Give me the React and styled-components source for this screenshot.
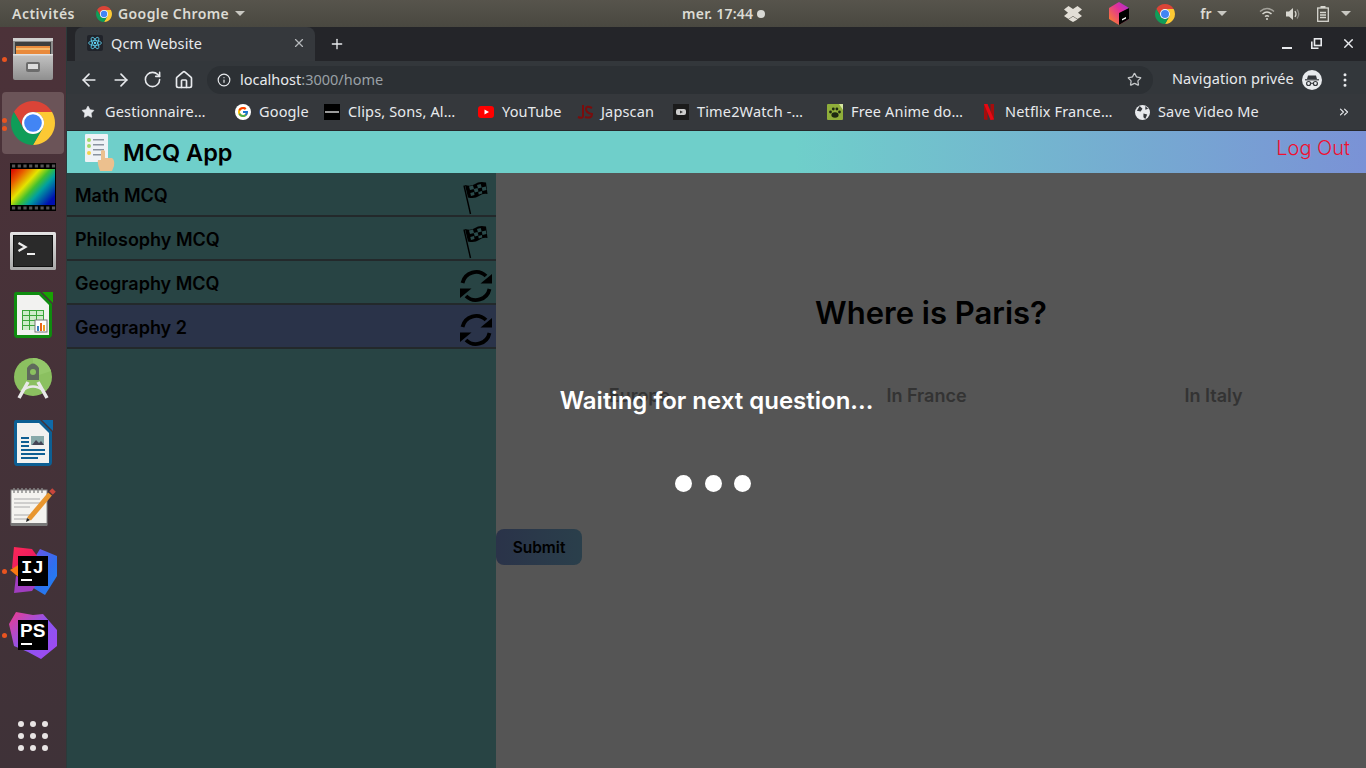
import React from 'react';
import styled, { createGlobalStyle } from 'styled-components';
import { ArrowLeft, ArrowRight, RotateCw, Home, Star, Info, X, Plus, MoreVertical, ChevronsRight } from 'lucide-react';
import { FcGoogle } from 'react-icons/fc';

const Global = createGlobalStyle`
  html, body { margin: 0; padding: 0; width: 1366px; height: 768px; overflow: hidden; background: #555; }
  * { box-sizing: border-box; }
`;
const UI = `"Noto Sans", "Open Sans", sans-serif`;
const APP = `"Inter", "Lato", sans-serif`;

const Screen = styled.div`display:flex;flex-direction:column;width:1366px;height:768px;`;
const TopBar = styled.header`
  height:27px;flex:none;display:flex;align-items:center;position:relative;
  background:linear-gradient(#57544c,#494840);color:#dcdbd4;
  font:600 14px ${UI};
`;
const Activities = styled.span`margin-left:12px;width:84px;flex:none;letter-spacing:.5px;`;
const AppMenu = styled.div`display:flex;align-items:center;gap:6px;flex:none;width:150px;letter-spacing:.4px;`;
const Caret = styled.i`width:0;height:0;border-left:5px solid transparent;border-right:5px solid transparent;border-top:5px solid #c9c8c2;display:inline-block;`;
const Clock = styled.div`position:absolute;left:682px;top:0;height:27px;display:flex;align-items:center;gap:4px;letter-spacing:.25px;`;
const ClockDot = styled.i`width:8px;height:8px;border-radius:50%;background:#d8d8d4;`;
const Tray = styled.div`margin-left:auto;display:flex;align-items:center;height:27px;padding-right:12px;`;
const TraySlot = styled.div`display:flex;align-items:center;justify-content:center;width:${p=>p.$w}px;margin-left:${p=>p.$ml||0}px;`;

const Body = styled.div`flex:1;display:flex;min-height:0;`;
const Dock = styled.nav`width:67px;flex:none;display:flex;flex-direction:column;background:linear-gradient(#4c3239,#3f3238);border-right:1px solid #2c3a3a;position:relative;`;
const DockItem = styled.div`
  height:64px;flex:none;display:flex;align-items:center;justify-content:center;position:relative;
  &::before{content:"";position:absolute;inset:1px 2px 1px 2px;border-radius:4px;background:${p=>p.$active?'#6b5458':'transparent'};}
  & > svg{position:relative;}
`;
const Pip = styled.i`position:absolute;left:2px;top:${p=>p.$top}px;width:5px;height:5px;border-radius:50%;background:#e95420;`;
const AppGrid = styled.div`margin-top:auto;margin-bottom:17px;align-self:center;display:grid;grid-template-columns:repeat(3,6px);gap:6px;`;
const GridDot = styled.i`width:6px;height:6px;border-radius:50%;background:#e8e4e4;`;

const Browser = styled.div`flex:1;min-width:0;display:flex;flex-direction:column;`;
const TabStrip = styled.div`height:34px;flex:none;background:#242529;display:flex;align-items:stretch;padding-left:8px;color:#e8eaed;`;
const Tab = styled.div`width:240px;height:34px;background:#35383c;border-radius:8px 8px 0 0;display:flex;align-items:center;padding:0 9px 3px 12px;gap:8px;font:14.5px ${UI};`;
const TabTitle = styled.span`flex:1;letter-spacing:.1px;`;
const Favicon = styled.span`width:16px;height:16px;background:#20232a;border-radius:2px;display:flex;align-items:center;justify-content:center;`;
const NewTab = styled.div`width:44px;display:flex;align-items:center;justify-content:center;padding-bottom:1px;`;
const WinControls = styled.div`margin-left:auto;display:flex;align-items:center;gap:19px;padding-right:10px;padding-bottom:1px;`;
const Toolbar = styled.div`height:33px;flex:none;background:#33373b;display:flex;align-items:center;padding:4px 0 0 12px;color:#e8eaed;`;
const NavBtns = styled.div`display:flex;align-items:center;gap:12px;width:128px;flex:none;`;
const Omni = styled.div`width:946px;height:28px;flex:none;border-radius:14px;background:#2c3034;display:flex;align-items:center;padding:0 11px 0 10px;gap:9px;font:14.5px ${UI};`;
const Host = styled.span`color:#e8eaed;`;
const Path = styled.span`color:#9aa0a6;`;
const OmniText = styled.span`flex:1;margin-top:-2px;`;
const Incog = styled.div`display:flex;align-items:center;font:14.5px ${UI};margin-left:19px;gap:8px;letter-spacing:.1px;white-space:nowrap;`;
const IncogLabel = styled.span`margin-top:-3px;`;
const Bookmarks = styled.div`height:37px;flex:none;background:#35383c;border-bottom:1px solid #26282b;display:flex;align-items:center;padding:0 0 0 13px;color:#e8eaed;font:14.5px ${UI};letter-spacing:.15px;position:relative;`;
const Bm = styled.div`width:${p=>p.$w}px;flex:none;display:flex;align-items:center;gap:8px;white-space:nowrap;`;
const BmLabel = styled.span`margin-top:-2px;`;
const Overflow = styled.div`margin-left:auto;padding-right:15px;display:flex;`;

const AppWrap = styled.div`flex:1;min-height:0;display:flex;flex-direction:column;font-family:${APP};`;
const AppHeader = styled.div`height:42px;flex:none;background:linear-gradient(90deg,#6fcfca 0%,#6fcfca 56%,#7a92d6 100%);display:flex;align-items:center;padding:0 16px 0 17px;`;
const Brand = styled.div`display:flex;align-items:center;gap:7px;font:600 23.5px ${APP};color:#000;`;
const LogOut = styled.a`margin-left:auto;margin-bottom:8px;font:300 20px ${APP};color:#f01030;`;
const Split = styled.div`flex:1;min-height:0;display:flex;`;
const Sidebar = styled.aside`width:429px;flex:none;background:#284444;`;
const Row = styled.div`height:44px;display:flex;align-items:center;justify-content:space-between;padding:2px 3px 0 8px;border-bottom:2px solid #23292b;background:${p=>p.$active?'#2a3349':'transparent'};font:600 18px ${APP};color:#000;overflow:hidden;`;
const FlagWrap = styled.span`display:flex;margin:6px 5px 0 0;`;
const SyncWrap = styled.span`display:flex;margin:6px 0 0 0;`;
const Main = styled.main`flex:1;position:relative;background:#555;display:flex;flex-direction:column;`;
const Question = styled.h1`margin:118px 0 0;text-align:center;font:600 31px/44px ${APP};color:#000;`;
const Answers = styled.div`display:grid;grid-template-columns:repeat(3,287px);margin-top:49px;`;
const Answer = styled.div`text-align:center;font:600 18px/24px ${APP};color:#333;`;
const Submit = styled.button`width:86px;height:36px;margin-top:121px;border:0;border-radius:8px;background:linear-gradient(90deg,#2a3349,#2a3f4b);font:600 15.5px ${APP};color:#000;padding:0;`;
const Overlay = styled.div`position:absolute;left:0;top:212px;width:441px;display:flex;flex-direction:column;align-items:center;`;
const Waiting = styled.div`font:600 24px/32px ${APP};color:#fff;white-space:nowrap;`;
const Dots = styled.div`display:flex;gap:12.5px;margin-top:58px;margin-left:-7px;`;
const Dot = styled.i`width:17px;height:17px;border-radius:50%;background:#fff;`;

const Chrome = ({s=24}) => (
  <svg width={s} height={s} viewBox="4 4 40 40">
    <path fill="#db4437" d="M41.32 14H24A10 10 0 0 0 15.34 29L6.68 14A20 20 0 0 1 41.32 14Z"/>
    <path fill="#fcc934" d="M24 44L32.66 29A10 10 0 0 0 24 14H41.32A20 20 0 0 1 24 44Z"/>
    <path fill="#0f9d58" d="M6.68 14L15.34 29A10 10 0 0 0 32.66 29L24 44A20 20 0 0 1 6.68 14Z"/>
    <circle cx="24" cy="24" r="10" fill="#fff"/><circle cx="24" cy="24" r="8" fill="#4285f4"/>
  </svg>
);
const Files = () => (
  <svg width="42" height="44" viewBox="0 0 42 44">
    <rect x="1" y="1" width="40" height="20" rx="2" fill="#8d8d8d"/>
    <rect x="1" y="1" width="40" height="3" fill="#cfcfcf"/>
    <rect x="3" y="5" width="36" height="12" fill="#3e3e3e"/>
    <rect x="4" y="9" width="34" height="8" fill="#e98a3c"/><rect x="4" y="11" width="34" height="2" fill="#f7bb6c"/>
    <defs><linearGradient id="fl" x1="0" y1="0" x2="0" y2="1"><stop offset="0" stopColor="#c4c4c4"/><stop offset="1" stopColor="#8f8f8f"/></linearGradient></defs>
    <rect x="1" y="17" width="40" height="26" rx="2" fill="url(#fl)"/>
    <rect x="1" y="17" width="40" height="1.5" fill="#e2e2e2"/>
    <rect x="14" y="25" width="14" height="10" rx="2" fill="#6c6c6c"/><rect x="16" y="27" width="10" height="5" fill="#ddd"/>
  </svg>
);
const Film = () => (
  <svg width="46" height="48" viewBox="0 0 46 48">
    <defs><linearGradient id="rb" x1="0" y1="0" x2="1" y2=".75">
      <stop offset="0" stopColor="#d80000"/><stop offset=".2" stopColor="#e85a00"/><stop offset=".42" stopColor="#e4e400"/><stop offset=".58" stopColor="#40c030"/><stop offset=".72" stopColor="#00a0a0"/><stop offset="1" stopColor="#0010b0"/>
    </linearGradient></defs>
    <rect width="46" height="48" fill="#000"/>
    <rect x="1" y="6" width="44" height="36" fill="url(#rb)"/>
    {[0,1,2,3,4,5,6,7].map(i=><g key={i} fill="#555"><rect x={2+i*5.7} y="1.5" width="3.2" height="3"/><rect x={2+i*5.7} y="43.5" width="3.2" height="3"/></g>)}
  </svg>
);
const Term = () => (
  <svg width="46" height="38" viewBox="0 0 46 38">
    <defs><linearGradient id="tm" x1="0" y1="0" x2="0" y2="1"><stop offset="0" stopColor="#e4e4e4"/><stop offset="1" stopColor="#a8a8a8"/></linearGradient></defs>
    <rect width="46" height="38" rx="1.5" fill="url(#tm)"/>
    <rect x="3.5" y="3.5" width="39" height="31" fill="#2a2a2a" stroke="#111"/>
    <path d="M8.5 11l7 4-7 4" stroke="#eee" strokeWidth="2.2" fill="none"/>
    <rect x="17" y="21" width="8" height="2" fill="#eee"/>
  </svg>
);
const Calc = () => (
  <svg width="40" height="48" viewBox="0 0 40 48">
    <path d="M3 1H27L39 13V43Q39 47 35 47H4Q1 47 1 43V4Q1 1 3 1Z" fill="#0f8c0f"/>
    <path d="M4 4H26L36 14V44H4Z" fill="#f2f2f0"/>
    <path d="M29 1H40V12Z" fill="#18a303"/>
    <path d="M9 19H31V39H9Z" fill="#3aa53a"/>
    <g fill="#cfeccb">{[0,1,2].map(c=>[0,1,2,3].map(r=><rect key={c+'-'+r} x={10+c*7} y={20+r*5} width="6" height="4"/>))}</g>
    <rect x="22" y="29" width="12" height="12" fill="#fff" stroke="#777"/>
    <rect x="24" y="35" width="2" height="5" fill="#3a7fc0"/><rect x="27" y="32" width="2" height="8" fill="#e8641b"/><rect x="30" y="34" width="2" height="6" fill="#f0a020"/>
  </svg>
);
const Android = () => (
  <svg width="40" height="42" viewBox="0 0 40 42">
    <circle cx="20" cy="19" r="19" fill="#8bc060"/>
    <path d="M20 0A19 19 0 0 1 38 13L20 19Z" fill="#94c86a"/>
    <path d="M14 10Q20 1 26 10V22H14Z" fill="#5f6a5c"/>
    <circle cx="20" cy="14" r="3" fill="#8bc060"/>
    <path d="M15 24L6 40M25 24L34 40" stroke="#e8e8e8" strokeWidth="3.5"/>
    <path d="M9 33Q20 24 31 33" stroke="#e8e8e8" strokeWidth="2.5" fill="none"/>
  </svg>
);
const Writer = () => (
  <svg width="40" height="48" viewBox="0 0 40 48">
    <path d="M3 1H27L39 13V43Q39 47 35 47H4Q1 47 1 43V4Q1 1 3 1Z" fill="#0d5f93"/>
    <path d="M4 4H26L36 14V44H4Z" fill="#f2f2f0"/>
    <path d="M29 1H40V12Z" fill="#0f6aa8"/>
    <rect x="18" y="17" width="13" height="9" fill="#8aa"/><path d="M19 26l4-5 3 3 2-2 3 4Z" fill="#445"/>
    <g fill="#0f5f93"><rect x="8" y="18" width="8" height="2"/><rect x="8" y="22" width="8" height="2"/><rect x="8" y="26" width="8" height="2"/><rect x="8" y="30" width="24" height="2"/><rect x="8" y="34" width="24" height="2"/><rect x="8" y="38" width="17" height="2"/></g>
  </svg>
);
const Notes = () => (
  <svg width="46" height="40" viewBox="0 0 46 40">
    <rect x="1" y="3" width="36" height="35" fill="#f4f3ef" stroke="#888"/>
    <rect x="1" y="36" width="36" height="3" fill="#777"/>
    <g stroke="#888" strokeWidth="1.4">{[4,8,12,16,20,24,28,32].map(x=><path key={x} d={`M${x} 1v5`}/>)}</g>
    <g stroke="#aaa" strokeWidth="1">{[12,16,20,28,32].map(y=><path key={y} d={`M4 ${y}H${y<20?30:20}`}/>)}</g>
    <path d="M19 32L40 7" stroke="#e8962e" strokeWidth="5"/><path d="M41 6l3-3" stroke="#c8463c" strokeWidth="5"/>
    <path d="M16 35l1-4 3 2Z" fill="#222"/>
  </svg>
);
const IJ = () => (
  <svg width="50" height="50" viewBox="0 0 50 50">
    <defs>
      <linearGradient id="ijb" x1="0" y1="0" x2="1" y2="1"><stop offset="0" stopColor="#7a4ee8"/><stop offset=".6" stopColor="#2f6fee"/><stop offset="1" stopColor="#1a86f2"/></linearGradient>
      <linearGradient id="ijp" x1="0" y1="0" x2="1" y2="1"><stop offset="0" stopColor="#fe2857"/><stop offset="1" stopColor="#dd1265"/></linearGradient>
    </defs>
    <path d="M32 3L49 10L49 30L37 49L22 40L20 22Z" fill="url(#ijb)"/>
    <path d="M6 1L24 3L32 14L22 30L4 22Z" fill="url(#ijp)"/>
    <path d="M2 24L12 18L14 34Z" fill="#f97a12"/>
    <path d="M8 30L30 36L24 45L6 47Z" fill="#a03dc0"/>
    <rect x="10" y="10" width="30" height="30" fill="#000"/>
    <text x="13" y="27" fill="#fff" fontFamily="Liberation Mono, monospace" fontWeight="700" fontSize="19">IJ</text>
    <rect x="13" y="33" width="11" height="2" fill="#fff"/>
  </svg>
);
const PS = () => (
  <svg width="50" height="50" viewBox="0 0 50 50">
    <defs><linearGradient id="psg" x1="0" y1="0" x2="1" y2="1"><stop offset="0" stopColor="#ee3a8c"/><stop offset=".5" stopColor="#8a56f2"/><stop offset="1" stopColor="#a347f0"/></linearGradient></defs>
    <path d="M8 2L25 5L35 4L49 20L49 36L33 49L20 42L6 36L1 14Z" fill="url(#psg)"/>
    <rect x="10" y="10" width="30" height="30" fill="#000"/>
    <text x="12" y="27" fill="#fff" fontFamily="Liberation Sans, sans-serif" fontWeight="700" fontSize="19">PS</text>
    <rect x="13" y="33" width="11" height="2" fill="#fff"/>
  </svg>
);
const Flag = () => (
  <svg width="25" height="33" viewBox="0 0 25 33">
    <path d="M1 3.5L7.5 32" stroke="#000" strokeWidth="1.4"/>
    <path d="M2 3Q8 5 12 2T23 .5L24.5 12Q20 11 16 14T5 15.5Z" fill="#000"/>
    <g fill="#2a4b4b">
      <path d="M6 4.5l4-1 1 3.5-4 1ZM14 3l3.7-1 1 3.5-3.7 1ZM10.8 7l3.7-1 1 3.5-3.7 1ZM18.8 5.5l4-1 .7 3.6-4 1ZM7.3 11l3.7-1 .5 3-3.5.9ZM15.3 10l3.7-1 .2 2.6-3.5 1Z"/>
    </g>
  </svg>
);
const Sync = () => (
  <svg width="34" height="34" viewBox="0 0 34 34" fill="none">
    <path d="M3.5 14A14 14 0 0 1 27 7" stroke="#000" strokeWidth="3.8"/>
    <path d="M30.5 20A14 14 0 0 1 7 27" stroke="#000" strokeWidth="3.8"/>
    <path d="M33 14.5H21.5L33 5Z" fill="#000"/><path d="M1 19.5H12.5L1 29Z" fill="#000"/>
  </svg>
);
const ReactMark = () => (
  <svg width="14" height="14" viewBox="-12 -12 24 24" fill="none" stroke="#61dafb" strokeWidth="1.3">
    <circle r="2" fill="#61dafb" stroke="none"/><ellipse rx="11" ry="4.2"/><ellipse rx="11" ry="4.2" transform="rotate(60)"/><ellipse rx="11" ry="4.2" transform="rotate(120)"/>
  </svg>
);
const Logo = () => (
  <svg width="32" height="38" viewBox="0 0 32 38">
    <rect x="1" y="1" width="23" height="28" rx="1" fill="#eef2f6"/>
    <g fill="#8a93a0"><rect x="9" y="6" width="11" height="1.5"/><rect x="9" y="11" width="11" height="1.5"/><rect x="9" y="16" width="11" height="1.5"/><rect x="9" y="21" width="11" height="1.5"/></g>
    <circle cx="5" cy="7" r="2" fill="#a3d86a"/><circle cx="5" cy="13" r="2" fill="#a3d86a"/><circle cx="5" cy="20" r="2" fill="#f3d34a"/>
    <path d="M16 38Q13 30 14 27L17 27V18Q19 16 21 18V25H28Q31 27 30 33L28 38Z" fill="#ecc08e"/>
  </svg>
);
const Incognito = () => (
  <svg width="20" height="20" viewBox="0 0 20 20">
    <circle cx="10" cy="10" r="10" fill="#e8eaed"/>
    <path d="M6 5.5H14L15 9H5Z" fill="#35383c"/><rect x="3" y="9.2" width="14" height="1.2" fill="#35383c"/>
    <circle cx="6.6" cy="13.5" r="2" fill="none" stroke="#35383c" strokeWidth="1.2"/><circle cx="13.4" cy="13.5" r="2" fill="none" stroke="#35383c" strokeWidth="1.2"/><path d="M8.6 13.3h2.8" stroke="#35383c"/>
  </svg>
);
const Globe = () => (
  <svg width="15" height="15" viewBox="0 0 16 16">
    <circle cx="8" cy="8" r="8" fill="#e8eaed"/>
    <path d="M5 1L8 4 6 7 2 6ZM9 9l4 1-2 5-2-2ZM11 1l3 3-3 1Z" fill="#35383c"/>
  </svg>
);
const GoogleIcon = () => <svg width="16" height="16" viewBox="0 0 16 16"><circle cx="8" cy="8" r="8" fill="#fff"/><g transform="translate(2 2)"><FcGoogle size={12}/></g></svg>;
const Clips = () => <svg width="16" height="16" viewBox="0 0 16 16"><rect width="16" height="16" fill="#000"/><rect x="1" y="7" width="14" height="2" fill="#999"/></svg>;
const YT = () => <svg width="16" height="16" viewBox="0 0 16 16"><rect y="2" width="16" height="12" rx="3" fill="#f00"/><path d="M6.5 5.5L11 8l-4.5 2.5Z" fill="#fff"/></svg>;
const JS = () => <svg width="16" height="16" viewBox="0 0 16 16" fill="none" stroke="#7a0c0c" strokeWidth="2"><path d="M6 1V12Q6 15 1 13"/><path d="M15 4Q9 1 9 5T15 10Q15 15 8 13"/></svg>;
const T2W = () => <svg width="16" height="16" viewBox="0 0 16 16"><rect width="16" height="16" fill="#1b1b1b"/><rect x="3" y="5" width="10" height="6" rx="2" fill="#ccc"/><path d="M7 6.5L10 8l-3 1.5Z" fill="#333"/></svg>;
const Paw = () => <svg width="16" height="16" viewBox="0 0 16 16"><rect width="16" height="16" rx="1" fill="#8fae3a"/><path d="M12 0H16V6Z" fill="#d5e6a0"/><g fill="#1e2a12"><ellipse cx="8" cy="11" rx="3.6" ry="2.8"/><circle cx="3.5" cy="8" r="1.4"/><circle cx="6.3" cy="5" r="1.4"/><circle cx="9.9" cy="5" r="1.4"/><circle cx="12.5" cy="8" r="1.4"/></g></svg>;
const Netflix = () => <svg width="16" height="16" viewBox="0 0 16 16"><path d="M3 0H6.5V16L3 15.5Z" fill="#a50d0d"/><path d="M9.5 0H13V15.5L9.5 16Z" fill="#a50d0d"/><path d="M3 0H6.5L13 15.5 9.5 16Z" fill="#e50914"/></svg>;
const Dropbox = () => <svg width="18" height="16" viewBox="0 0 18 16" fill="#e2ded6"><path d="M4.5 0L9 3 13.5 0 18 3.4 14 6.8 18 10 13.5 13 9 10 4.5 13 0 10 4 6.8 0 3.4Z"/><path d="M4.5 13.5L9 10.5l4.5 3L9 16Z"/></svg>;
const Toolbox = () => <svg width="20" height="23" viewBox="0 0 20 23"><defs><linearGradient id="tb" x1="0" y1="1" x2="1" y2="0"><stop offset="0" stopColor="#ff8a1e"/><stop offset=".6" stopColor="#e0309a"/><stop offset="1" stopColor="#a030e0"/></linearGradient></defs><path d="M10 0L20 6V17L10 23 0 17V6Z" fill="url(#tb)"/><path d="M10 11L20 6V17L10 23Z" fill="#000"/><path d="M13 17l4-2v1.5l-4 2Z" fill="#fff"/></svg>;
const WifiI = () => <svg width="16" height="14" viewBox="0 0 16 14" fill="none" stroke="#d8d7d0" strokeWidth="1.5"><path d="M1 4.5Q8-1.5 15 4.5" opacity=".6"/><path d="M3.5 7Q8 3 12.5 7"/><path d="M6 9.5Q8 8 10 9.5"/><circle cx="8" cy="12" r="1" fill="#d8d7d0" stroke="none"/></svg>;
const Vol = () => <svg width="16" height="14" viewBox="0 0 16 14" fill="none"><path d="M0 4.5H3L7 1V13L3 9.5H0Z" fill="#d8d7d0"/><path d="M9 4Q11 7 9 10" stroke="#d8d7d0" strokeWidth="1.3"/><path d="M11 2.5Q14.5 7 11 11.5" stroke="#8a8983" strokeWidth="1.3"/></svg>;
const Batt = () => <svg width="12" height="16" viewBox="0 0 12 16" fill="none"><rect x=".7" y="2" width="10.6" height="13.3" stroke="#d8d7d0" strokeWidth="1.3"/><rect x="3.5" y="0" width="5" height="2" fill="#d8d7d0"/><path d="M3 6.5h6M3 9h6M3 11.5h6" stroke="#d8d7d0" strokeWidth="1.4"/></svg>;

const Restore = () => <svg width="11" height="11" viewBox="0 0 11 11" fill="none" stroke="#e8eaed" strokeWidth="1.6"><rect x="3.5" y=".8" width="6.7" height="6.7"/><path d="M.8 3.5V10.2H7.5" /></svg>;
const Minim = () => <svg width="10" height="11" viewBox="0 0 10 11"><rect y="9" width="10" height="2" fill="#e8eaed"/></svg>;

const subjects = [
  { name:'Math MCQ', done:true }, { name:'Philosophy MCQ', done:true },
  { name:'Geography MCQ' }, { name:'Geography 2', active:true },
];
const bookmarks = [
  [155, <Star key="s" size={14} fill="#e8eaed" strokeWidth={1} style={{marginLeft:1,marginRight:2}}/>, 'Gestionnaire…'],
  [89, <GoogleIcon key="g"/>, 'Google'], [154, <Clips key="c"/>, 'Clips, Sons, Al…'],
  [99, <YT key="y"/>, 'YouTube'], [96, <JS key="j"/>, 'Japscan'],
  [154, <T2W key="t"/>, 'Time2Watch -…'], [154, <Paw key="p"/>, 'Free Anime do…'],
  [154, <Netflix key="n"/>, 'Netflix France…'], [130, <Globe key="gl"/>, 'Save Video Me'],
];

export default function App() {
  return (
    <Screen>
      <Global/>
      <TopBar>
        <Activities>Activités</Activities>
        <AppMenu><Chrome s={16}/>Google Chrome<Caret/></AppMenu>
        <Clock>mer. 17:44<ClockDot/></Clock>
        <Tray>
          <TraySlot $w={46}><Dropbox/></TraySlot>
          <TraySlot $w={46}><Toolbox/></TraySlot>
          <TraySlot $w={46}><Chrome s={20}/></TraySlot>
          <TraySlot $w={24} $ml={6}>fr</TraySlot>
          <TraySlot $w={8}><Caret/></TraySlot>
          <TraySlot $w={26} $ml={28}><WifiI/></TraySlot>
          <TraySlot $w={28}><Vol/></TraySlot>
          <TraySlot $w={30}><Batt/></TraySlot>
          <TraySlot $w={16}><Caret/></TraySlot>
        </Tray>
      </TopBar>
      <Body>
        <Dock>
          <DockItem><Pip $top={30}/><Files/></DockItem>
          <DockItem $active><Pip $top={27}/><Pip $top={35}/><Chrome s={44}/></DockItem>
          <DockItem><Film/></DockItem>
          <DockItem><Term/></DockItem>
          <DockItem><Calc/></DockItem>
          <DockItem><Android/></DockItem>
          <DockItem><Writer/></DockItem>
          <DockItem><Notes/></DockItem>
          <DockItem><Pip $top={30}/><IJ/></DockItem>
          <DockItem><Pip $top={30}/><PS/></DockItem>
          <AppGrid>{Array.from({length:9},(_,i)=><GridDot key={i}/>)}</AppGrid>
        </Dock>
        <Browser>
          <TabStrip>
            <Tab><Favicon><ReactMark/></Favicon><TabTitle>Qcm Website</TabTitle><X size={14} color="#b5b8bb"/></Tab>
            <NewTab><Plus size={16}/></NewTab>
            <WinControls><Minim/><Restore/><X size={15} strokeWidth={2.2}/></WinControls>
          </TabStrip>
          <Toolbar>
            <NavBtns><ArrowLeft size={20} strokeWidth={2}/><ArrowRight size={20} strokeWidth={2}/><RotateCw size={19} strokeWidth={2}/><Home size={20} strokeWidth={2}/></NavBtns>
            <Omni><Info size={14}/><OmniText><Host>localhost</Host><Path>:3000/home</Path></OmniText><Star size={15} color="#c4c7c9"/></Omni>
            <Incog><IncogLabel>Navigation privée</IncogLabel><Incognito/></Incog>
            <MoreVertical size={18} style={{marginLeft:14}}/>
          </Toolbar>
          <Bookmarks>
            {bookmarks.map(([w,icon,label])=><Bm key={label} $w={w}>{icon}<BmLabel>{label}</BmLabel></Bm>)}
            <Overflow><ChevronsRight size={14}/></Overflow>
          </Bookmarks>
          <AppWrap>
            <AppHeader>
              <Brand><Logo/>MCQ App</Brand>
              <LogOut>Log Out</LogOut>
            </AppHeader>
            <Split>
              <Sidebar>
                {subjects.map(s=>(
                  <Row key={s.name} $active={s.active}>{s.name}{s.done?<FlagWrap><Flag/></FlagWrap>:<SyncWrap><Sync/></SyncWrap>}</Row>
                ))}
              </Sidebar>
              <Main>
                <Question>Where is Paris?</Question>
                <Answers><Answer>Europe</Answer><Answer>In France</Answer><Answer>In Italy</Answer></Answers>
                <div><Submit>Submit</Submit></div>
                <Overlay>
                  <Waiting>Waiting for next question...</Waiting>
                  <Dots><Dot/><Dot/><Dot/></Dots>
                </Overlay>
              </Main>
            </Split>
          </AppWrap>
        </Browser>
      </Body>
    </Screen>
  );
}
